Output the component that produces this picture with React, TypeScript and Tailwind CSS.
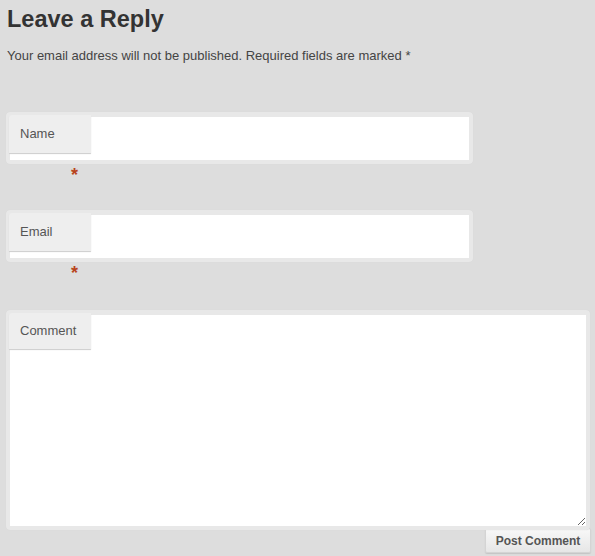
import React from "react";

const FONT = { fontFamily: '"Liberation Sans", Arial, sans-serif' };

function Field({ label, after }: { label: string; after: string }) {
  return (
    <div>
      <div className="relative w-[467px] h-[52px] rounded-[4px] bg-[#e8e8e8] px-[4px] pt-[5px] pb-[4px] shadow-[0_0_1px_#d0d0d0]">
        <input className="w-full h-full bg-white outline-none" />
        <label className="absolute left-[3px] top-[3px] w-[82px] h-[38px] flex items-center pl-[11px] bg-[#eeeeee] text-[13px] text-[#555] rounded-tl-[3px] shadow-[0_1px_1px_#cccccc]">
          {label}
        </label>
      </div>
      <div className={`${after} pl-[65px] pt-[2px] text-[18px] leading-[18px] font-bold text-[#b8441c]`}>*</div>
    </div>
  );
}

export default function App() {
  return (
    <div className="min-h-[556px] bg-[#dddddd] px-[6px] pt-[5px] text-[#333]" style={FONT}>
      <h2 className="text-[23.5px] leading-[28px] font-bold text-[#333] pl-[1px]">Leave a Reply</h2>
      <p className="mt-[15px] text-[13px] leading-[16px] text-[#444] pl-[1px]">
        Your email address will not be published. Required fields are marked *
      </p>

      <form className="mt-[48px]">
        <Field label="Name" after="h-[46px]" />
        <Field label="Email" after="h-[48px]" />

        <div className="relative w-[584px] h-[220px] rounded-[4px] bg-[#e8e8e8] px-[4px] pt-[5px] pb-[4px] shadow-[0_0_1px_#d0d0d0]">
          <textarea className="block w-full h-full bg-white outline-none resize-y" />
          <label className="absolute left-[3px] top-[3px] w-[82px] h-[36px] flex items-center pl-[11px] bg-[#eeeeee] text-[13px] text-[#555] rounded-tl-[3px] shadow-[0_1px_1px_#cccccc]">
            Comment
          </label>
        </div>

        <div className="flex justify-end -mt-[2px]">
          <button
            type="button"
            className="w-[106px] h-[25px] mr-[-2px] rounded-[2px] border border-[#d4d4d4] bg-gradient-to-b from-[#f8f8f8] to-[#e6e6e6] text-[12px] font-bold text-[#555] shadow-[0_1px_1px_#c4c4c4]"
          >
            Post Comment
          </button>
        </div>
      </form>
    </div>
  );
}
